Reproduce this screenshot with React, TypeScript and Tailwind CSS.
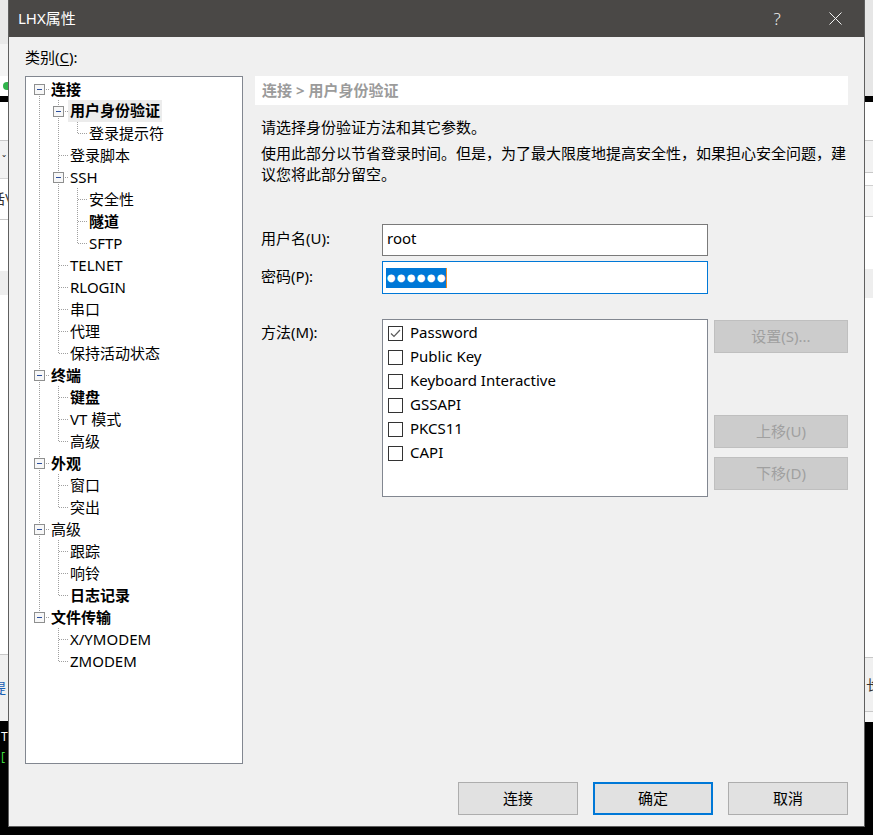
import React from "react";

type Node = {
  label: string;
  level: number;
  bold?: boolean;
  exp?: boolean;
  selected?: boolean;
};

const nodes: Node[] = [
  { label: "连接", level: 0, bold: true, exp: true },
  { label: "用户身份验证", level: 1, bold: true, exp: true, selected: true },
  { label: "登录提示符", level: 2 },
  { label: "登录脚本", level: 1 },
  { label: "SSH", level: 1, exp: true },
  { label: "安全性", level: 2 },
  { label: "隧道", level: 2, bold: true },
  { label: "SFTP", level: 2 },
  { label: "TELNET", level: 1 },
  { label: "RLOGIN", level: 1 },
  { label: "串口", level: 1 },
  { label: "代理", level: 1 },
  { label: "保持活动状态", level: 1 },
  { label: "终端", level: 0, bold: true, exp: true },
  { label: "键盘", level: 1, bold: true },
  { label: "VT 模式", level: 1 },
  { label: "高级", level: 1 },
  { label: "外观", level: 0, bold: true, exp: true },
  { label: "窗口", level: 1 },
  { label: "突出", level: 1 },
  { label: "高级", level: 0, exp: true },
  { label: "跟踪", level: 1 },
  { label: "响铃", level: 1 },
  { label: "日志记录", level: 1, bold: true },
  { label: "文件传输", level: 0, bold: true, exp: true },
  { label: "X/YMODEM", level: 1 },
  { label: "ZMODEM", level: 1 },
];

const methods = [
  { label: "Password", checked: true },
  { label: "Public Key" },
  { label: "Keyboard Interactive" },
  { label: "GSSAPI" },
  { label: "PKCS11" },
  { label: "CAPI" },
];

function buildRows(list: Node[]) {
  const cont: boolean[] = [];
  return list.map((n, i) => {
    let hasNext = false;
    for (let j = i + 1; j < list.length; j++) {
      if (list[j].level < n.level) break;
      if (list[j].level === n.level) {
        hasNext = true;
        break;
      }
    }
    const anc = cont.slice(0, n.level);
    cont[n.level] = hasNext;
    return { ...n, hasNext, anc, first: i === 0 };
  });
}

const dot = { stroke: "#a0a0a0", strokeWidth: 1, strokeDasharray: "1 1" };

function TreeRow({ row }: { row: ReturnType<typeof buildRows>[number] }) {
  const L = row.level;
  const w = (L + 1) * 19;
  const cx = 9.5 + 19 * L;
  return (
    <div className="flex h-[22px] items-center">
      <svg width={w} height={22} className="shrink-0" shapeRendering="crispEdges">
        {row.anc.map((c, i) =>
          c ? <line key={i} x1={9.5 + 19 * i} y1={0} x2={9.5 + 19 * i} y2={22} {...dot} /> : null
        )}
        {!(L === 0 && row.first) && <line x1={cx} y1={0} x2={cx} y2={12} {...dot} />}
        {row.hasNext && <line x1={cx} y1={12} x2={cx} y2={22} {...dot} />}
        <line x1={cx} y1={11.5} x2={w} y2={11.5} {...dot} />
        {row.exp && (
          <g>
            <rect x={cx - 5} y={6.5} width={10} height={10} fill="#f7f7f7" stroke="#8e8f8f" />
            <line x1={cx - 2.5} y1={11.5} x2={cx + 2.5} y2={11.5} stroke="#2c4f9e" strokeWidth={1} />
          </g>
        )}
      </svg>
      {row.selected ? (
        <span className="h-[22px] bg-[#ececec] px-[2px] leading-[21px] font-bold text-black">
          {row.label}
        </span>
      ) : (
        <span className={`pl-[2px] leading-[21px] text-black ${row.bold ? "font-bold" : ""}`}>
          {row.label}
        </span>
      )}
    </div>
  );
}

function LeftStrip() {
  return (
    <div className="flex w-[8px] shrink-0 flex-col overflow-hidden text-[14px] leading-[18px]">
      <div className="h-[44px] bg-[#e9e9e9]" />
      <div className="h-[32px] bg-[#f4f4f4]" />
      <div className="flex h-[20px] items-center bg-white">
        <div className="ml-[3px] h-[8px] w-[8px] shrink-0 rounded-full bg-[#2fb34a]" />
      </div>
      <div className="h-[6px] bg-black" />
      <div className="h-[39px] border-b border-[#c8c8c8] bg-white" />
      <div className="flex h-[38px] items-center border-b border-[#d4d4d4] bg-[#f2f2f2] pl-[2px] text-[10px] text-[#333]">
        ˇ
      </div>
      <div className="flex h-[41px] items-center border-b border-[#c8c8c8] bg-white">
        <span className="ml-[-9px] whitespace-nowrap text-[#333]">话\</span>
      </div>
      <div className="h-[51px] bg-white" />
      <div className="h-[24px] bg-[#eeeeee]" />
      <div className="h-[359px] bg-white" />
      <div className="flex h-[67px] items-center border-t border-[#c8c8c8] bg-[#f0f0f0]">
        <span className="ml-[-8px] whitespace-nowrap text-[#1a5fb4]">提</span>
      </div>
      <div className="flex flex-1 flex-col bg-black pl-[1px] pt-[6px] text-[12px] leading-[20px]">
        <span className="text-white">T</span>
        <span className="text-[#3ddc3d]">[</span>
      </div>
    </div>
  );
}

function RightStrip() {
  return (
    <div className="flex w-[8px] shrink-0 flex-col overflow-hidden text-[14px] leading-[18px]">
      <div className="h-[96px] bg-[#e6e6e6]" />
      <div className="h-[6px] bg-black" />
      <div className="h-[39px] border-b border-[#c8c8c8] bg-white" />
      <div className="h-[32px] border-b border-[#c8c8c8] bg-[#f2f2f2]" />
      <div className="h-[12px] bg-white" />
      <div className="h-[32px] border-y border-[#d0d0d0] bg-[#f6f6f6]" />
      <div className="h-[52px] bg-white" />
      <div className="h-[29px] bg-[#eeeeee]" />
      <div className="h-[359px] bg-white" />
      <div className="flex h-[55px] items-center border-y border-[#c8c8c8] bg-[#f0f0f0]">
        <span className="ml-[1px] whitespace-nowrap text-[#333]">长</span>
      </div>
      <div className="h-[10px] bg-[#f7f7f7]" />
      <div className="flex-1 bg-black" />
    </div>
  );
}

function Checkbox({ checked }: { checked?: boolean }) {
  return (
    <div className="flex h-[15px] w-[15px] shrink-0 items-center justify-center border border-[#333333] bg-white">
      {checked && (
        <svg width="13" height="13" viewBox="0 0 13 13">
          <path d="M2 6.5 L5 9.5 L11 3" fill="none" stroke="#5a5a5a" strokeWidth="1.2" />
        </svg>
      )}
    </div>
  );
}

export default function App() {
  const rows = buildRows(nodes);
  const font = "font-['Noto_Sans','Noto_Sans_CJK_SC',sans-serif]";
  return (
    <div className={`flex h-[835px] w-[873px] flex-col bg-black ${font} text-[15px]`}>
      <div className="flex h-[827px]">
        <LeftStrip />
        <div className="flex w-[857px] shrink-0 flex-col border-x border-b border-[#5f5f5f] bg-[#f0f0f0]">
          {/* title bar */}
          <div className="flex h-[37px] shrink-0 items-center bg-[#4a4846] text-white">
            <span className="pl-[9px] text-[15px]">LHX属性</span>
            <div className="ml-auto flex h-full">
              <div className="flex h-full w-[58px] items-center justify-center text-[17px] font-light text-[#f0f0f0]">
                ?
              </div>
              <div className="flex h-full w-[58px] items-center justify-center">
                <svg width="13" height="13" viewBox="0 0 13 13">
                  <path d="M0.5 0.5 L12.5 12.5 M12.5 0.5 L0.5 12.5" stroke="#f2f2f2" strokeWidth="1" />
                </svg>
              </div>
            </div>
          </div>

          {/* body */}
          <div className="flex flex-1 flex-col px-[16px] pt-[11px]">
            <div className="flex">
              <div className="flex w-[218px] shrink-0 flex-col">
                <div className="mb-[9px] leading-[19px] text-black">
                  类别(<span className="underline underline-offset-2">C</span>):
                </div>
                <div className="h-[688px] border border-[#828790] bg-white pl-[4px] pt-[1px]">
                  {rows.map((r, i) => (
                    <TreeRow key={i} row={r} />
                  ))}
                </div>
              </div>

              <div className="ml-[12px] mt-[28px] flex flex-1 flex-col">
                <div className="flex h-[29px] items-center bg-white pb-[1px] pl-[7px] font-bold text-[#9b9b9b]">
                  连接 &gt; 用户身份验证
                </div>
                <div className="mt-[13px] pl-[6px] leading-[19px] text-black">
                  请选择身份验证方法和其它参数。
                </div>
                <div className="mt-[6px] whitespace-nowrap pl-[6px] leading-[21px] text-black">
                  使用此部分以节省登录时间。但是，为了最大限度地提高安全性，如果担心安全问题，建
                  <br />
                  议您将此部分留空。
                </div>

                <div className="mt-[39px] flex items-center">
                  <div className="w-[127px] pb-[3px] pl-[6px] text-black">用户名(U):</div>
                  <div className="flex h-[32px] w-[326px] items-center border border-[#7a7a7a] bg-white pb-[4px] pl-[4px] text-black">
                    root
                  </div>
                </div>
                <div className="mt-[5px] flex items-center">
                  <div className="w-[127px] pb-[3px] pl-[6px] text-black">密码(P):</div>
                  <div className="flex h-[33px] w-[326px] items-center border border-[#0078d7] bg-white pl-[3px]">
                    <div className="flex h-[20px] items-center bg-[#0078d7] font-['DejaVu_Sans',sans-serif] text-[10px] leading-[20px] text-white">
                      {[0, 1, 2, 3, 4, 5].map((k) => (
                        <span key={k} className="inline-block w-[10px] text-center">
                          ●
                        </span>
                      ))}
                    </div>
                    <div className="h-[20px] w-[1px] bg-[#f08a24]" />
                  </div>
                </div>

                <div className="mt-[25px] flex items-start">
                  <div className="w-[127px] pl-[6px] pt-[4px] leading-[19px] text-black">方法(M):</div>
                  <div className="flex h-[178px] w-[326px] flex-col border border-[#828790] bg-white pl-[5px] pt-[1px]">
                    {methods.map((m) => (
                      <div key={m.label} className="flex h-[24px] items-center">
                        <Checkbox checked={m.checked} />
                        <span className="ml-[7px] pb-[2px] text-black">{m.label}</span>
                      </div>
                    ))}
                  </div>
                  <div className="ml-[6px] mt-[1px] flex flex-1 flex-col">
                    <div className="flex h-[33px] items-center justify-center border border-[#bfbfbf] bg-[#cccccc] pb-[1px] text-[#a0a0a0]">
                      设置(S)...
                    </div>
                    <div className="mt-[62px] flex h-[33px] items-center justify-center border border-[#bfbfbf] bg-[#cccccc] pb-[1px] text-[#a0a0a0]">
                      上移(U)
                    </div>
                    <div className="mt-[9px] flex h-[33px] items-center justify-center border border-[#bfbfbf] bg-[#cccccc] pb-[1px] text-[#a0a0a0]">
                      下移(D)
                    </div>
                  </div>
                </div>
              </div>
            </div>

            <div className="mt-[18px] flex justify-end gap-[15px]">
              <div className="flex h-[33px] w-[120px] items-center justify-center border border-[#adadad] bg-[#e1e1e1] text-black">
                连接
              </div>
              <div className="flex h-[33px] w-[120px] items-center justify-center border-2 border-[#0078d7] bg-[#e1e1e1] text-black">
                确定
              </div>
              <div className="flex h-[33px] w-[120px] items-center justify-center border border-[#adadad] bg-[#e1e1e1] text-black">
                取消
              </div>
            </div>
          </div>
        </div>
        <RightStrip />
      </div>
    </div>
  );
}
